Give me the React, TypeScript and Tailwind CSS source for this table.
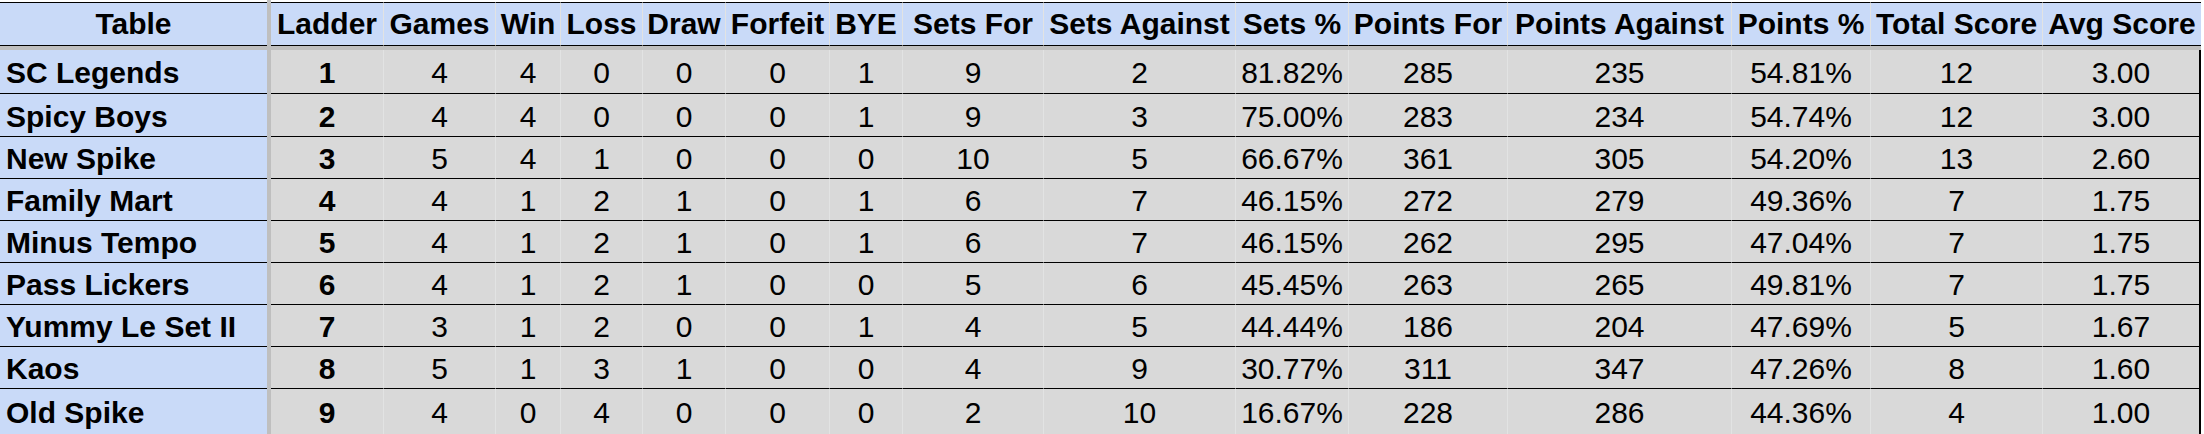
import React from 'react';

interface Column {
  label: string;
  width: string;
}

interface TeamRow {
  team: string;
  values: string[];
}

const columns: Column[] = [
  { label: 'Ladder', width: 'w-[113px]' },
  { label: 'Games', width: 'w-[112px]' },
  { label: 'Win', width: 'w-[65px]' },
  { label: 'Loss', width: 'w-[82px]' },
  { label: 'Draw', width: 'w-[83px]' },
  { label: 'Forfeit', width: 'w-[104px]' },
  { label: 'BYE', width: 'w-[73px]' },
  { label: 'Sets For', width: 'w-[141px]' },
  { label: 'Sets Against', width: 'w-[192px]' },
  { label: 'Sets %', width: 'w-[113px]' },
  { label: 'Points For', width: 'w-[159px]' },
  { label: 'Points Against', width: 'w-[224px]' },
  { label: 'Points %', width: 'w-[139px]' },
  { label: 'Total Score', width: 'w-[172px]' },
  { label: 'Avg Score', width: 'w-[158px]' },
];

const rows: TeamRow[] = [
  { team: 'SC Legends', values: ['1', '4', '4', '0', '0', '0', '1', '9', '2', '81.82%', '285', '235', '54.81%', '12', '3.00'] },
  { team: 'Spicy Boys', values: ['2', '4', '4', '0', '0', '0', '1', '9', '3', '75.00%', '283', '234', '54.74%', '12', '3.00'] },
  { team: 'New Spike', values: ['3', '5', '4', '1', '0', '0', '0', '10', '5', '66.67%', '361', '305', '54.20%', '13', '2.60'] },
  { team: 'Family Mart', values: ['4', '4', '1', '2', '1', '0', '1', '6', '7', '46.15%', '272', '279', '49.36%', '7', '1.75'] },
  { team: 'Minus Tempo', values: ['5', '4', '1', '2', '1', '0', '1', '6', '7', '46.15%', '262', '295', '47.04%', '7', '1.75'] },
  { team: 'Pass Lickers', values: ['6', '4', '1', '2', '1', '0', '0', '5', '6', '45.45%', '263', '265', '49.81%', '7', '1.75'] },
  { team: 'Yummy Le Set II', values: ['7', '3', '1', '2', '0', '0', '1', '4', '5', '44.44%', '186', '204', '47.69%', '5', '1.67'] },
  { team: 'Kaos', values: ['8', '5', '1', '3', '1', '0', '0', '4', '9', '30.77%', '311', '347', '47.26%', '8', '1.60'] },
  { team: 'Old Spike', values: ['9', '4', '0', '4', '0', '0', '0', '2', '10', '16.67%', '228', '286', '44.36%', '4', '1.00'] },
];

// row heights follow the sheet's drawn grid, last row is cut by the window
const rowHeights = ['h-[44px]', 'h-[43px]', 'h-[42px]', 'h-[42px]', 'h-[42px]', 'h-[42px]', 'h-[42px]', 'h-[42px]', 'h-[46px]'];

export default function App() {
  return (
    <div className="w-[2204px] h-[434px] overflow-hidden bg-white text-black text-[30px] leading-[34px] font-['Liberation_Sans',Arial,sans-serif]">
      {/* strip above the sheet */}
      <div className="flex h-[2px]">
        <div className="w-[267px] shrink-0" />
        <div className="w-[4px] shrink-0 bg-[#bfbfbf]" />
      </div>

      {/* header */}
      <div className="flex h-[44px] font-bold">
        <div className="w-[267px] shrink-0 flex items-center justify-center bg-[#c9daf8] border-y border-black">Table</div>
        <div className="w-[4px] shrink-0 bg-[#bfbfbf]" />
        {columns.map((col, i) => (
          <div
            key={col.label}
            className={`${col.width} shrink-0 flex items-center justify-center whitespace-nowrap bg-[#c9daf8] border-y border-black ${i === columns.length - 1 ? '' : 'border-r border-r-[#e2e3e3]'}`}
          >
            {col.label}
          </div>
        ))}
      </div>

      {/* frozen row line */}
      <div className="h-[4px] w-[2201px] bg-[#bfbfbf]" />

      {rows.map((row, r) => (
        <div key={row.team} className={`flex ${rowHeights[r]}`}>
          <div className="w-[267px] shrink-0 flex items-center pl-[6px] pt-[3px] font-bold whitespace-nowrap bg-[#c9daf8] border-b border-black">{row.team}</div>
          <div className="w-[4px] shrink-0 bg-[#bfbfbf]" />
          {row.values.map((v, i) => (
            <div
              key={i}
              className={`${columns[i].width} shrink-0 flex items-center justify-center pt-[3px] whitespace-nowrap bg-[#d9d9d9] border-b border-black ${i === 0 ? 'font-bold' : ''} ${i === row.values.length - 1 ? 'border-r-2 border-r-black' : 'border-r border-r-[#e2e3e3]'}`}
            >
              {v}
            </div>
          ))}
        </div>
      ))}
    </div>
  );
}
